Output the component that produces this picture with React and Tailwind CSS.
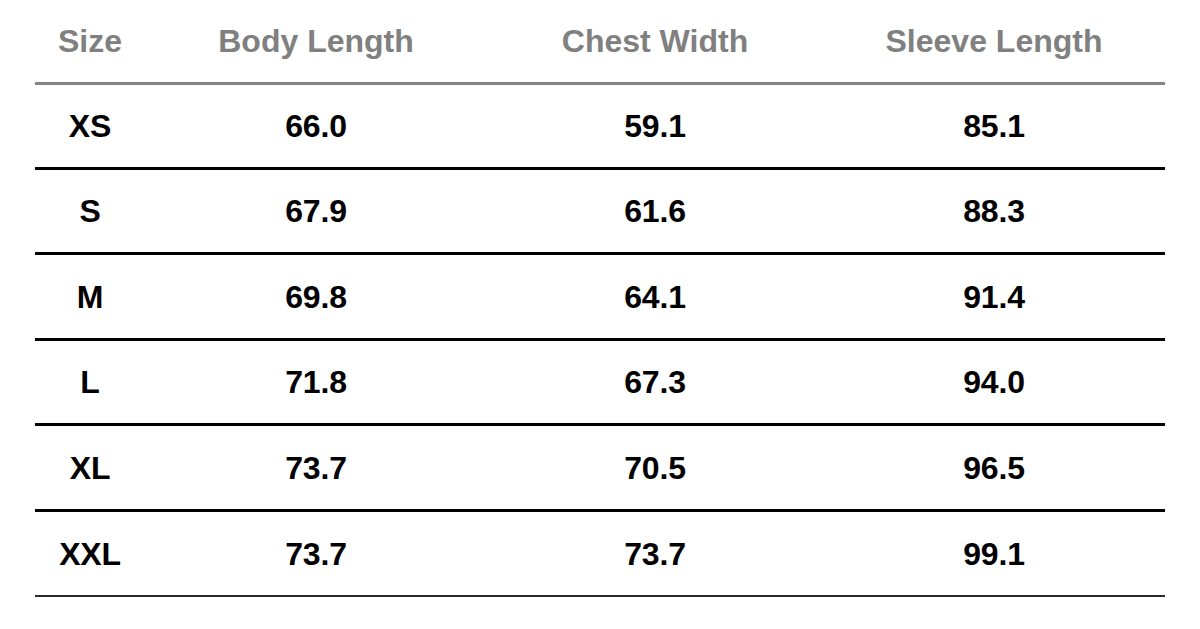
const rows = [
  { size: 'XS', body: '66.0', chest: '59.1', sleeve: '85.1', h: 'h-[82px]' },
  { size: 'S', body: '67.9', chest: '61.6', sleeve: '88.3', h: 'h-[82px]' },
  { size: 'M', body: '69.8', chest: '64.1', sleeve: '91.4', h: 'h-[83px]' },
  { size: 'L', body: '71.8', chest: '67.3', sleeve: '94.0', h: 'h-[82px]' },
  { size: 'XL', body: '73.7', chest: '70.5', sleeve: '96.5', h: 'h-[83px]' },
  { size: 'XXL', body: '73.7', chest: '73.7', sleeve: '99.1', h: 'h-[83px]' },
]

const cols = 'grid grid-cols-[110px_342px_336px_342px] items-center text-center'

const App = () => {
  return (
    <div className="w-[1200px] h-[629px] bg-white font-['Liberation_Sans',Arial,sans-serif] font-bold">
      <div className="mx-[35px] w-[1130px]">
        <div className={`${cols} h-[85px] border-b-[3px] border-[#858585] text-[#808080] text-[32px]`}>
          <div>Size</div>
          <div>Body Length</div>
          <div>Chest Width</div>
          <div>Sleeve Length</div>
        </div>
        {rows.map((r, i) => (
          <div
            key={r.size}
            className={`${cols} ${r.h} box-content text-black text-[32px] tracking-[-0.2px] ${
              i === rows.length - 1 ? 'border-b-2 border-[#2a2a2a]' : 'border-b-[3px] border-black'
            }`}
          >
            <div>{r.size}</div>
            <div>{r.body}</div>
            <div>{r.chest}</div>
            <div>{r.sleeve}</div>
          </div>
        ))}
      </div>
    </div>
  )
}

export default App
